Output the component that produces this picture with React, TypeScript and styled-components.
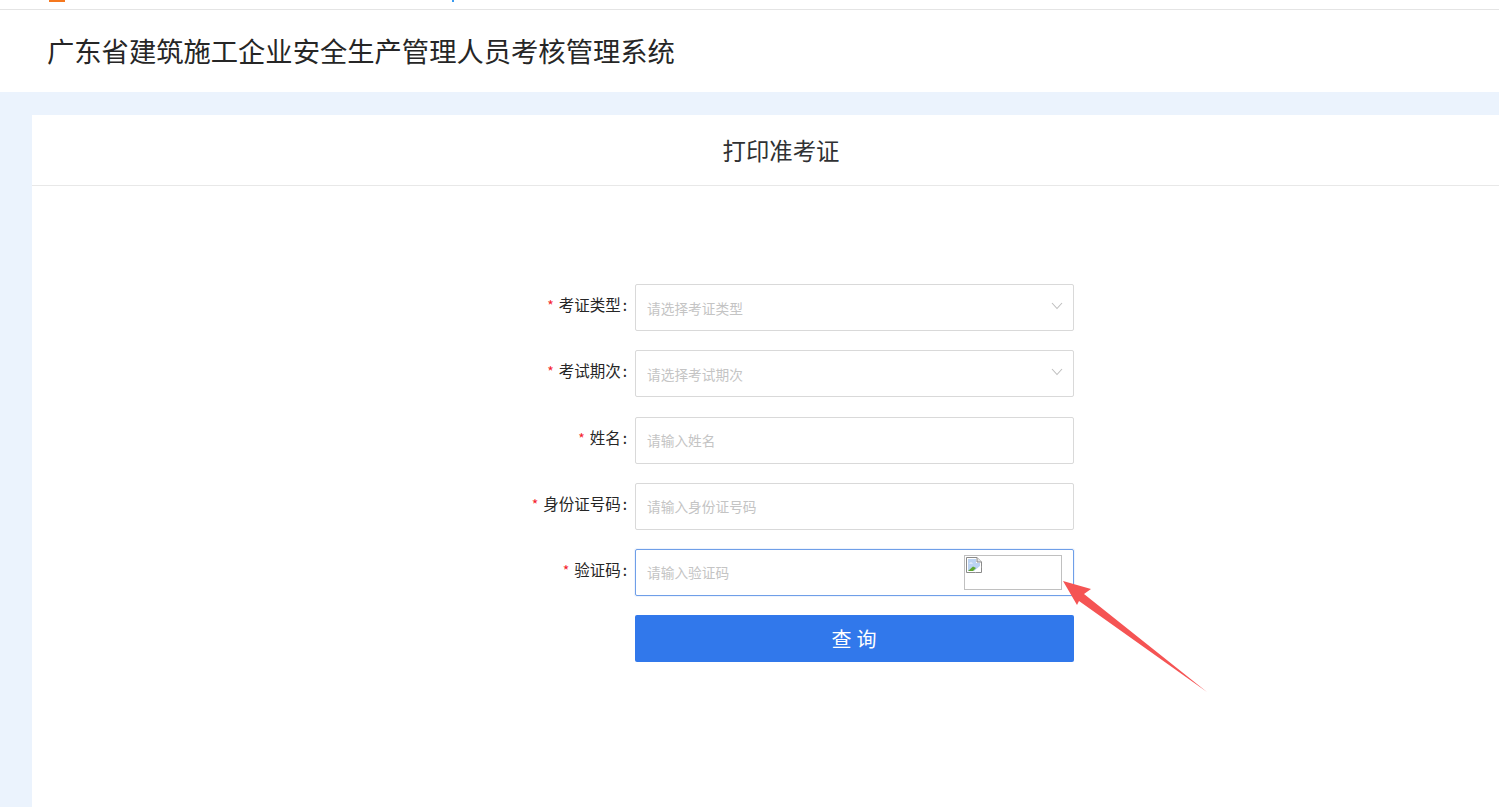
import styled, { createGlobalStyle } from 'styled-components';

const GlobalStyle = createGlobalStyle`
  html, body {
    margin: 0;
    padding: 0;
    height: 100%;
    overflow: hidden;
    background: #ebf3fd;
  }

  body {
    font-family: "Noto Sans CJK SC", "Liberation Sans", sans-serif;
    color: #303133;
  }
`;

const Page = styled.div`
  height: 807px;
  overflow: hidden;
  position: relative;
  background: #ebf3fd;
`;

const TopStrip = styled.div`
  display: flex;
  align-items: flex-start;
  height: 9px;
  padding-left: 49px;
  background: #fff;
  border-bottom: 1px solid #e4e4e4;
`;

const LogoSliver = styled.span`
  width: 16px;
  height: 2px;
  background: #f5781e;
`;

const LinkSliver = styled.span`
  width: 2px;
  height: 2px;
  margin-left: 387px;
  background: #3a9bf0;
`;

const Header = styled.header`
  display: flex;
  align-items: center;
  height: 82px;
  padding-left: 47px;
  background: #fff;
`;

const SystemTitle = styled.h1`
  margin: -2px 0 0;
  font-size: 27.3px;
  font-weight: 400;
  color: #262626;
  white-space: nowrap;
`;

const Card = styled.main`
  width: 1498px;
  height: 692px;
  margin: 23px 0 0 32px;
  background: #fff;
`;

const CardHeader = styled.div`
  display: flex;
  align-items: center;
  justify-content: center;
  height: 70px;
  border-bottom: 1px solid #e8e8e8;
`;

const CardTitle = styled.h2`
  margin: 0;
  font-size: 23.4px;
  font-weight: 400;
  color: #303133;
`;

const Form = styled.form`
  display: flex;
  flex-direction: column;
  gap: 19.2px;
  padding-top: 98.2px;
`;

const Row = styled.div`
  display: grid;
  grid-template-columns: 603px 439px;
`;

const Label = styled.label`
  padding: 8px 8px 0 0;
  font-size: 15.5px;
  line-height: 25px;
  text-align: right;
  color: #262626;
  white-space: nowrap;
`;

const Star = styled.span`
  margin-right: 5px;
  font-size: 14px;
  color: #f5222d;
`;

const Colon = styled.span`
  margin-left: 2px;
`;

const Field = styled.div<{ $focused?: boolean }>`
  position: relative;
  display: flex;
  align-items: center;
  box-sizing: border-box;
  height: 47px;
  padding: 0 11px;
  border: 1px solid ${({ $focused }) => ($focused ? '#6f9fe8' : '#d9d9d9')};
  border-radius: 2px;
  background: #fff;
  box-shadow: ${({ $focused }) => ($focused ? '0 0 0 1px rgba(50, 120, 235, 0.08)' : 'none')};
`;

const TextInput = styled.input`
  flex: 1;
  min-width: 0;
  padding: 0;
  border: 0;
  outline: 0;
  background: transparent;
  font: inherit;
  font-size: 13.7px;
  color: #303133;

  &::placeholder {
    color: #c4c4c4;
    opacity: 1;
  }
`;

const Chevron = styled.svg`
  flex: none;
  width: 12px;
  height: 8px;
  margin: -3px -1px 0 0;
  fill: none;
  stroke: #bfbfbf;
  stroke-width: 1.1;
`;

const CaptchaImage = styled.div`
  position: absolute;
  top: 5px;
  right: 11px;
  box-sizing: border-box;
  width: 98px;
  height: 35px;
  padding: 1px;
  border: 1px solid #c0c0c0;
`;

const SubmitButton = styled.button`
  display: block;
  width: 100%;
  height: 47px;
  padding: 0 0 1px 4px;
  border: 0;
  border-radius: 2px;
  background: #3178eb;
  font: inherit;
  font-size: 20px;
  letter-spacing: 5px;
  color: #fff;
`;

const Arrow = styled.svg`
  position: absolute;
  left: 0;
  top: 0;
  width: 1499px;
  height: 807px;
  pointer-events: none;
`;

type FieldConfig = {
  label: string;
  placeholder: string;
  select?: boolean;
  captcha?: boolean;
};

const fields: FieldConfig[] = [
  { label: '考证类型', placeholder: '请选择考证类型', select: true },
  { label: '考试期次', placeholder: '请选择考试期次', select: true },
  { label: '姓名', placeholder: '请输入姓名' },
  { label: '身份证号码', placeholder: '请输入身份证号码' },
  { label: '验证码', placeholder: '请输入验证码', captcha: true },
];

function BrokenImageIcon() {
  return (
    <svg width="16" height="16" viewBox="0 0 16 16" style={{ display: 'block' }}>
      <path d="M0.5 0.5H11L15.5 5V15.5H0.5Z" fill="#fff" stroke="#8a8a8a" />
      <path d="M11 0.5V5H15.5" fill="#e4e4e4" stroke="#8a8a8a" />
      <path d="M2 2H10V6H14V9L8 14H2Z" fill="#bcd3f2" />
      <path d="M3 6.5C4 5 6 5 7 6.5Z" fill="#fff" />
      <path d="M2 14L7 9.5L10 11L7 14Z" fill="#5fa82f" />
      <path d="M9 15L15 9.5" stroke="#fff" strokeWidth="1.5" />
    </svg>
  );
}

export default function App() {
  return (
    <Page>
      <GlobalStyle />
      <TopStrip>
        <LogoSliver />
        <LinkSliver />
      </TopStrip>
      <Header>
        <SystemTitle>广东省建筑施工企业安全生产管理人员考核管理系统</SystemTitle>
      </Header>
      <Card>
        <CardHeader>
          <CardTitle>打印准考证</CardTitle>
        </CardHeader>
        <Form onSubmit={(e) => e.preventDefault()}>
          {fields.map((item) => (
            <Row key={item.label}>
              <Label>
                <Star>*</Star>
                {item.label}
                <Colon>:</Colon>
              </Label>
              <Field $focused={item.captcha}>
                <TextInput placeholder={item.placeholder} readOnly={item.select} />
                {item.select && (
                  <Chevron viewBox="0 0 12 8">
                    <path d="M1 1L6 6.5L11 1" />
                  </Chevron>
                )}
                {item.captcha && (
                  <CaptchaImage>
                    <BrokenImageIcon />
                  </CaptchaImage>
                )}
              </Field>
            </Row>
          ))}
          <Row>
            <span />
            <SubmitButton type="submit">查询</SubmitButton>
          </Row>
        </Form>
      </Card>
      <Arrow viewBox="0 0 1499 807">
        <polygon points="1063,581 1091,589 1084,594 1207,692 1079,601 1077,605" fill="#f55454" />
      </Arrow>
    </Page>
  );
}
